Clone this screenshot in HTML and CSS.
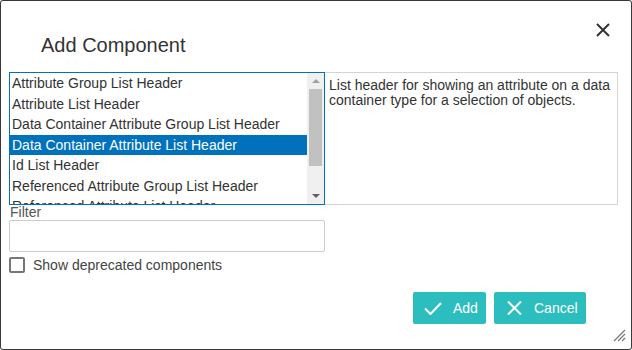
FILE: index.html
```html
<!DOCTYPE html>
<html lang="en">
<head>
    <meta charset="UTF-8">
    <title>Add Component</title>
    <link rel="stylesheet" href="styles.css">
</head>
<body>
    <div class="dialog">
        <header class="dialog-header">
            <h1>Add Component</h1>
            <button class="close-btn" aria-label="Close">
                <svg width="14" height="14" viewBox="0 0 14 14"><path d="M1 1L13 13M13 1L1 13" stroke="#333" stroke-width="2" fill="none"/></svg>
            </button>
        </header>

        <div class="picker">
            <div class="listbox">
                <ul class="items">
                    <li>Attribute Group List Header</li>
                    <li>Attribute List Header</li>
                    <li>Data Container Attribute Group List Header</li>
                    <li class="selected">Data Container Attribute List Header</li>
                    <li>Id List Header</li>
                    <li>Referenced Attribute Group List Header</li>
                    <li>Referenced Attribute List Header</li>
                </ul>
                <div class="scrollbar">
                    <span class="arrow up"></span>
                    <span class="thumb"></span>
                    <span class="arrow down"></span>
                </div>
            </div>
            <div class="description">List header for showing an attribute on a data container type for a selection of objects.</div>
        </div>

        <label class="filter-label" for="filter">Filter</label>
        <input id="filter" class="filter-input" type="text">

        <label class="check-row">
            <span class="checkbox"></span>
            Show deprecated components
        </label>

        <footer class="dialog-footer">
            <button class="btn btn-add">
                <svg width="18" height="13" viewBox="0 0 18 13"><path d="M1 6.5L6.5 12L17 1" stroke="#fff" stroke-width="2" fill="none"/></svg>
                Add
            </button>
            <button class="btn btn-cancel">
                <svg width="15" height="14" viewBox="0 0 15 14"><path d="M1 0.5L14 13.5M14 0.5L1 13.5" stroke="#fff" stroke-width="2" fill="none"/></svg>
                Cancel
            </button>
        </footer>

        <svg class="grip" width="14" height="14" viewBox="0 0 14 14"><path d="M2 13L13 2M6 13L13 6M10 13L13 10" stroke="#777" stroke-width="1.2" fill="none"/></svg>
    </div>
</body>
</html>
```

FILE: styles.css
```css
:root {
    --text-color: #333;
    --border-color: #ccc;
    --accent-color: #2cbebe;
    --select-color: #0072bc;
}

* {
    margin: 0;
    padding: 0;
    box-sizing: border-box;
}

body {
    font-family: 'Liberation Sans', Arial, sans-serif;
    font-size: 14px;
    color: var(--text-color);
    background-color: #ddd;
}

.dialog {
    position: relative;
    width: 632px;
    height: 350px;
    background-color: white;
    border: 1px solid #3a3a3a;
    border-radius: 3px;
    padding: 0 13px 0 8px;
    display: flex;
    flex-direction: column;
}

.dialog-header {
    display: flex;
    justify-content: space-between;
    align-items: flex-start;
    height: 71px;
    padding-left: 32px;
}

.dialog-header h1 {
    font-size: 20px;
    font-weight: 400;
    line-height: 24px;
    margin-top: 32px;
}

.close-btn {
    background: none;
    border: none;
    margin-top: 22px;
    margin-right: 8px;
    cursor: pointer;
    display: flex;
}

.picker {
    display: flex;
    height: 133px;
}

.listbox {
    width: 316px;
    border: 1px solid var(--select-color);
    display: flex;
    overflow: hidden;
}

.items {
    list-style: none;
    flex: 1;
}

.items li {
    height: 20.5px;
    line-height: 20.5px;
    padding-left: 2px;
    white-space: nowrap;
}

.items li.selected {
    background-color: var(--select-color);
    color: white;
}

.scrollbar {
    width: 17px;
    background-color: #f0f0f0;
    display: flex;
    flex-direction: column;
    align-items: center;
}

.arrow {
    height: 16px;
    width: 100%;
    display: flex;
    align-items: center;
    justify-content: center;
}

.arrow::before {
    content: '';
    border-left: 4px solid transparent;
    border-right: 4px solid transparent;
}

.arrow.up::before {
    border-bottom: 4px solid #a3a3a3;
}

.arrow.down {
    margin-top: auto;
}

.arrow.down::before {
    border-top: 4px solid #606060;
}

.thumb {
    width: 13px;
    height: 77px;
    background-color: #c1c1c1;
}

.description {
    flex: 1;
    border: 1px solid #d4d4d4;
    border-left: none;
    padding: 5px 4px 0 4px;
    line-height: 15px;
}

.filter-label {
    display: block;
    color: #555;
    line-height: 16px;
    margin-top: -1px;
    padding-left: 1px;
}

.filter-input {
    width: 316px;
    height: 32px;
    border: 1px solid var(--border-color);
    border-radius: 2px;
    font: inherit;
}

.check-row {
    display: flex;
    align-items: center;
    gap: 8px;
    margin-top: 5px;
    height: 16px;
    color: #444;
}

.checkbox {
    width: 16px;
    height: 16px;
    border: 2px solid #767676;
    border-radius: 2px;
}

.dialog-footer {
    display: flex;
    justify-content: flex-end;
    gap: 8px;
    margin-top: 19px;
    padding-right: 32px;
}

.btn {
    display: flex;
    align-items: center;
    gap: 11px;
    height: 32px;
    padding: 0 8px 0 11px;
    background-color: var(--accent-color);
    color: white;
    border: none;
    border-radius: 2px;
    font: inherit;
    font-size: 14px;
    cursor: pointer;
}

.btn-add {
    width: 73px;
}

.btn-cancel {
    width: 92px;
    gap: 12px;
    padding-left: 13px;
}

.grip {
    position: absolute;
    right: 5px;
    bottom: 7px;
}
```
